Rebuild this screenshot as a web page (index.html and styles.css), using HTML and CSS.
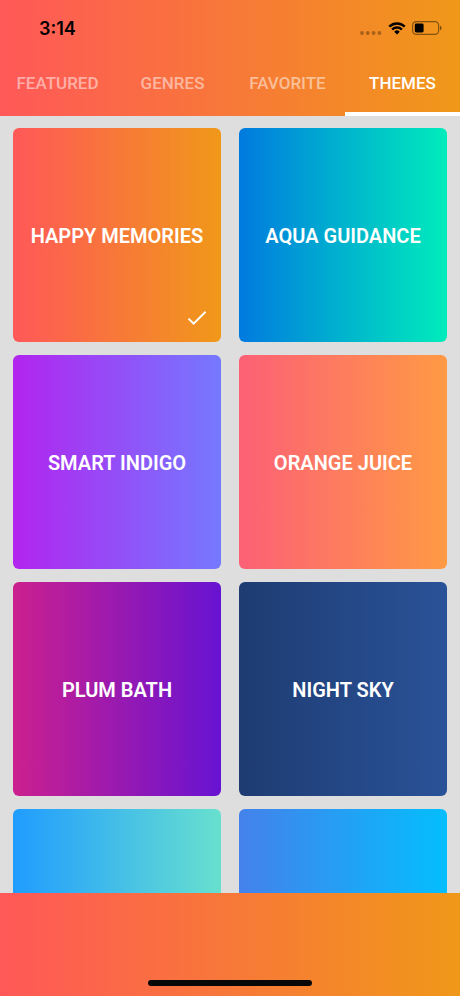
FILE: index.html
```html
<!DOCTYPE html>
<html lang="en">
<head>
<meta charset="utf-8">
<meta name="viewport" content="width=device-width, initial-scale=1">
<title>Themes</title>
<link rel="stylesheet" href="styles.css">
</head>
<body>
<div class="app">
  <header class="header">
    <div class="status">
      <time class="clock">3:14</time>
      <div class="indicators">
        <svg class="signal" viewBox="0 0 22 4" aria-hidden="true"><circle cx="2" cy="2" r="1.9"/><circle cx="7.8" cy="2" r="1.9"/><circle cx="13.6" cy="2" r="1.9"/><circle cx="19.4" cy="2" r="1.9"/></svg>
        <svg class="wifi" viewBox="0 0 18 13" aria-hidden="true"><path d="M9 2.7c2.5 0 4.8.95 6.6 2.6.14.13.36.13.5 0l1.25-1.3a.36.36 0 0 0 0-.52 12.1 12.1 0 0 0-16.7 0 .36.36 0 0 0 0 .52L1.9 5.3c.14.13.36.13.5 0A9.7 9.7 0 0 1 9 2.7z"/><path d="M9 6.85c1.36 0 2.68.5 3.7 1.42.14.13.36.13.5 0l1.28-1.3a.37.37 0 0 0 0-.53 7.9 7.9 0 0 0-10.96 0 .37.37 0 0 0 0 .53l1.28 1.3c.14.13.36.13.5 0A5.5 5.5 0 0 1 9 6.85z"/><path d="M11.55 9.4a.37.37 0 0 1 0 .54l-2.28 2.3a.38.38 0 0 1-.54 0l-2.28-2.3a.37.37 0 0 1 0-.54 3.9 3.9 0 0 1 5.1 0z"/></svg>
        <svg class="battery" viewBox="0 0 30 14" aria-hidden="true"><rect class="battery-case" x=".6" y=".6" width="26" height="12.8" rx="3.6"/><rect x="2.8" y="2.6" width="8.8" height="8.8" rx="1.4"/><path class="battery-tip" d="M28 4.8c1 .4 1.6 1.2 1.6 2.2S29 8.8 28 9.2z"/></svg>
      </div>
    </div>
    <nav class="tabs">
      <button class="tab" type="button">FEATURED</button>
      <button class="tab" type="button">GENRES</button>
      <button class="tab" type="button">FAVORITE</button>
      <button class="tab tab-active" type="button" aria-current="page">THEMES</button>
    </nav>
  </header>
  <main class="themes">
    <button class="card happy" type="button">HAPPY MEMORIES
      <svg class="check" viewBox="0 0 20 16" aria-hidden="true"><path d="M1.5 8.6 6.6 13.7 18.6 1.7"/></svg>
    </button>
    <button class="card aqua" type="button">AQUA GUIDANCE</button>
    <button class="card indigo" type="button">SMART INDIGO</button>
    <button class="card orange" type="button">ORANGE JUICE</button>
    <button class="card plum" type="button">PLUM BATH</button>
    <button class="card night" type="button">NIGHT SKY</button>
    <div class="card seafoam"></div>
    <div class="card sky"></div>
  </main>
  <footer class="footer"><div class="home-bar"></div></footer>
</div>
</body>
</html>
```
FILE: styles.css
```css
* {
  box-sizing: border-box;
}

body {
  margin: 0;
  font-family: Roboto, "Liberation Sans", sans-serif;
}

button {
  border: 0;
  padding: 0;
  font: inherit;
  cursor: pointer;
}

.app {
  display: flex;
  flex-direction: column;
  height: 100vh;
  background: #dedede;
}

.header,
.footer,
.happy {
  background: linear-gradient(90deg, #ff5858, #f09819);
}

.header,
.footer {
  flex: none;
}

.status {
  display: flex;
  align-items: center;
  justify-content: space-between;
  height: 52px;
  padding: 4px 18px 0 39px;
}

.clock {
  padding-top: 2px;
  font: 600 18px/24px Inter, sans-serif;
  color: #000;
}

.indicators {
  display: flex;
  align-items: center;
  gap: 6px;
}

.signal {
  width: 22px;
  height: 4px;
  margin-top: 10px;
  opacity: 0.3;
}

.wifi {
  width: 18px;
  height: 13px;
}

.battery {
  width: 30px;
  height: 14px;
}

.battery-case {
  fill: none;
  stroke: #000;
  stroke-opacity: 0.45;
  stroke-width: 1.2;
}

.battery-tip {
  fill-opacity: 0.5;
}

.tabs {
  display: grid;
  grid-template-columns: repeat(4, 1fr);
  height: 64px;
}

.tab {
  padding-top: 2px;
  border-bottom: 4px solid transparent;
  background: none;
  font-size: 17px;
  font-weight: 500;
  line-height: 24px;
  color: rgba(255, 255, 255, 0.5);
}

.tab-active {
  border-bottom-color: #fff;
  color: #fff;
}

.themes {
  display: grid;
  flex: 1;
  grid-template-columns: 1fr 1fr;
  grid-auto-rows: 214px;
  gap: 13px 18px;
  min-height: 0;
  padding: 12px 13px;
  overflow: hidden;
}

.card {
  position: relative;
  padding-top: 2px;
  border-radius: 6px;
  font-size: 20px;
  font-weight: 600;
  line-height: 24px;
  color: #fff;
}

.aqua {
  background: linear-gradient(90deg, #007adf, #00ecbc);
}

.indigo {
  background: linear-gradient(90deg, #b224ef, #7579ff);
}

.orange {
  background: linear-gradient(90deg, #fc6076, #ff9a44);
}

.plum {
  background: linear-gradient(90deg, #cc208e, #6713d2);
}

.night {
  background: linear-gradient(90deg, #1e3c72, #2a5298);
}

.seafoam {
  background: linear-gradient(90deg, #209cff, #68e0cf);
}

.sky {
  background: linear-gradient(90deg, #4481eb, #04befe);
}

.check {
  position: absolute;
  right: 14px;
  bottom: 16px;
  width: 20px;
  height: 16px;
  fill: none;
  stroke: #fff;
  stroke-width: 2;
}

.footer {
  display: flex;
  align-items: flex-end;
  justify-content: center;
  height: 103px;
  padding-bottom: 10px;
}

.home-bar {
  width: 164px;
  height: 6px;
  border-radius: 3px;
  background: #080808;
}
```
